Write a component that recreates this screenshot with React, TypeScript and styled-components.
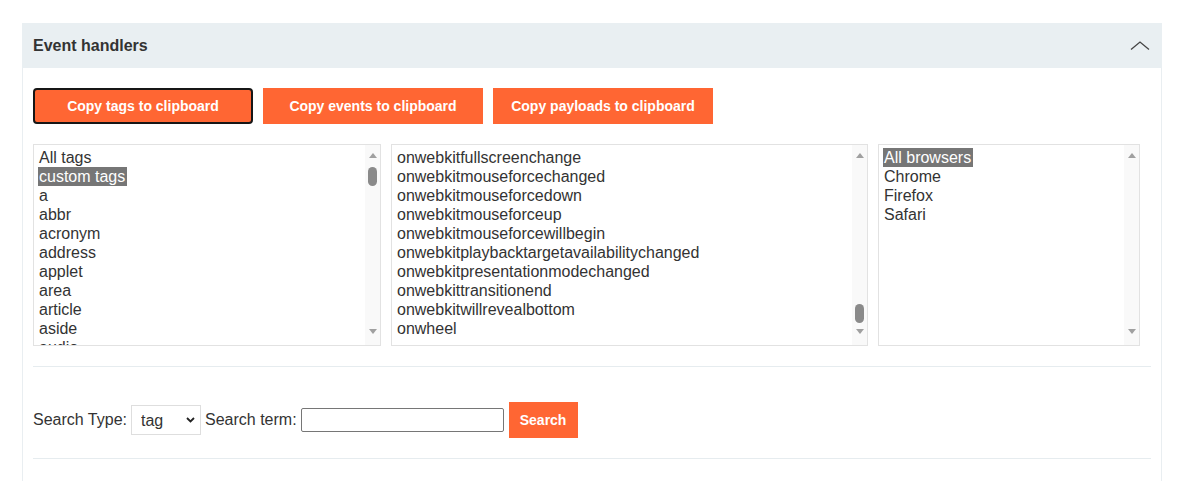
import React from "react";
import styled, { createGlobalStyle } from "styled-components";

const GlobalStyle = createGlobalStyle`
  html, body { margin: 0; padding: 0; background: #fff; }
  body { font-family: "Liberation Sans", Arial, sans-serif; color: #333; }
`;

const Page = styled.div`
  padding: 23px 15px 0 22px;
`;

const Panel = styled.section`
  display: flex;
  flex-direction: column;
`;

const Header = styled.div`
  height: 45px;
  background: #e9eff2;
  display: flex;
  align-items: center;
  justify-content: space-between;
  padding: 0 12px 0 11px;
`;

const Title = styled.h2`
  margin: 0;
  font-size: 16px;
  font-weight: bold;
  color: #333;
`;

const Body = styled.div`
  border-left: 1px solid #e9eef1;
  border-right: 1px solid #e9eef1;
  padding: 20px 10px 23px 10px;
  display: flex;
  flex-direction: column;
`;

const ButtonRow = styled.div`
  display: flex;
  gap: 10px;
  margin-bottom: 20px;
`;

const ActionButton = styled.button<{ $focused?: boolean; $width?: number }>`
  box-sizing: border-box;
  width: ${(p) => p.$width ?? 220}px;
  height: 36px;
  background: #ff6633;
  color: #fff;
  font-family: "Liberation Sans", Arial, sans-serif;
  font-weight: bold;
  font-size: 14px;
  border: ${(p) => (p.$focused ? "2px solid #161616" : "none")};
  border-radius: ${(p) => (p.$focused ? "4px" : "0")};
  padding: 0;
  cursor: pointer;
`;

const ListsRow = styled.div`
  display: flex;
  gap: 10px;
`;

const ListBox = styled.div<{ $width: number }>`
  box-sizing: border-box;
  width: ${(p) => p.$width}px;
  height: 202px;
  border: 1px solid #e2e2e2;
  display: flex;
  background: #fff;
`;

const Items = styled.div`
  flex: 1;
  overflow: hidden;
  padding: 3px 0 0 4px;
`;

const Item = styled.div`
  font-size: 16px;
  line-height: 19px;
  height: 19px;
  white-space: nowrap;
  color: #333;
`;

const ItemText = styled.span<{ $selected?: boolean }>`
  display: inline-block;
  padding: 0 2px 0 1px;
  background: ${(p) => (p.$selected ? "#767676" : "transparent")};
  color: ${(p) => (p.$selected ? "#fff" : "#333")};
`;

const ScrollCol = styled.div`
  width: 15px;
  background: #f9f9f9;
  display: flex;
  flex-direction: column;
  align-items: center;
  padding: 8px 0 11px;
  box-sizing: border-box;
`;

const ArrowUp = styled.div`
  width: 0;
  height: 0;
  border-left: 4.5px solid transparent;
  border-right: 4.5px solid transparent;
  border-bottom: 5px solid #a0a0a0;
`;

const ArrowDown = styled.div`
  width: 0;
  height: 0;
  border-left: 4.5px solid transparent;
  border-right: 4.5px solid transparent;
  border-top: 5px solid #a0a0a0;
`;

const Track = styled.div`
  flex: 1;
  display: flex;
  flex-direction: column;
  align-items: center;
`;

const Thumb = styled.div`
  width: 9px;
  height: 19px;
  border-radius: 5px;
  background: #8a8a8a;
`;

const SearchRow = styled.div`
  display: flex;
  align-items: center;
  gap: 4px;
  padding: 35px 0 20px;
  margin-top: 20px;
  border-top: 1px solid #e6ecef;
  border-bottom: 1px solid #e6ecef;
`;

const Label = styled.label`
  font-size: 16px;
  color: #333;
`;

const SelectWrap = styled.div`
  position: relative;
  display: inline-flex;
`;

const Select = styled.select`
  appearance: none;
  -webkit-appearance: none;
  box-sizing: border-box;
  width: 70px;
  height: 30px;
  border: 1px solid #dedede;
  border-radius: 0;
  background: #fff;
  font-family: "Liberation Sans", Arial, sans-serif;
  font-size: 16px;
  color: #333;
  padding: 0 0 0 9px;
`;

const SelectChevron = styled.svg`
  position: absolute;
  right: 6px;
  top: 12px;
  pointer-events: none;
`;

const TextInput = styled.input`
  box-sizing: border-box;
  width: 203px;
  height: 24px;
  border: 1px solid #767676;
  border-radius: 2px;
  font-size: 14px;
  margin: 0 1px 0 0;
`;

type ListProps = {
  width: number;
  items: string[];
  selected?: string;
  thumbTop?: number;
};

function List({ width, items, selected, thumbTop }: ListProps) {
  return (
    <ListBox $width={width}>
      <Items>
        {items.map((it) => (
          <Item key={it}>
            <ItemText $selected={it === selected}>{it}</ItemText>
          </Item>
        ))}
      </Items>
      <ScrollCol>
        <ArrowUp />
        <Track>
          {thumbTop !== undefined && <Thumb style={{ marginTop: thumbTop }} />}
        </Track>
        <ArrowDown />
      </ScrollCol>
    </ListBox>
  );
}

const tags = [
  "All tags",
  "custom tags",
  "a",
  "abbr",
  "acronym",
  "address",
  "applet",
  "area",
  "article",
  "aside",
  "audio",
];

const events = [
  "onwebkitfullscreenchange",
  "onwebkitmouseforcechanged",
  "onwebkitmouseforcedown",
  "onwebkitmouseforceup",
  "onwebkitmouseforcewillbegin",
  "onwebkitplaybacktargetavailabilitychanged",
  "onwebkitpresentationmodechanged",
  "onwebkittransitionend",
  "onwebkitwillrevealbottom",
  "onwheel",
];

const browsers = ["All browsers", "Chrome", "Firefox", "Safari"];

export default function App() {
  return (
    <>
      <GlobalStyle />
      <Page>
        <Panel>
          <Header>
            <Title>Event handlers</Title>
            <svg width="20" height="10" viewBox="0 0 20 10" fill="none">
              <polyline points="1,8.5 10,1 19,8.5" stroke="#444" strokeWidth="1.3" />
            </svg>
          </Header>
          <Body>
            <ButtonRow>
              <ActionButton $focused>Copy tags to clipboard</ActionButton>
              <ActionButton>Copy events to clipboard</ActionButton>
              <ActionButton>Copy payloads to clipboard</ActionButton>
            </ButtonRow>
            <ListsRow>
              <List width={348} items={tags} selected="custom tags" thumbTop={9} />
              <List width={477} items={events} thumbTop={146} />
              <List width={262} items={browsers} selected="All browsers" />
            </ListsRow>
            <SearchRow>
              <Label>Search Type:</Label>
              <SelectWrap>
                <Select defaultValue="tag">
                  <option value="tag">tag</option>
                  <option value="event">event</option>
                </Select>
                <SelectChevron width="9" height="6" viewBox="0 0 9 6" fill="none">
                  <polyline points="1,1 4.5,4.5 8,1" stroke="#222" strokeWidth="1.8" />
                </SelectChevron>
              </SelectWrap>
              <Label>Search term:</Label>
              <TextInput type="text" />
              <ActionButton $width={69}>Search</ActionButton>
            </SearchRow>
          </Body>
        </Panel>
      </Page>
    </>
  );
}
